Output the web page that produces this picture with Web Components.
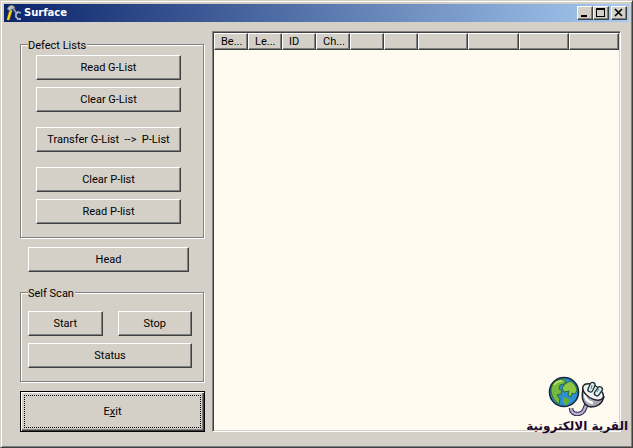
<!DOCTYPE html>
<html lang="en">
<head>
<meta charset="utf-8">
<title>Surface</title>
<style>
  html {
    --face: #d4d0c8;
    --light: #ffffff;
    --shadow: #808080;
    --dark: #404040;
    --paper: #fffbf0;
  }
  body {
    margin: 0;
    font: 11px/13px Roboto, "Liberation Sans", Arial, sans-serif;
    color: #000;
    background: var(--face);
  }
</style>
</head>
<body>

<surface-window caption="Surface">
  <side-panel slot="side">
    <group-box class="lists" caption="Defect Lists">
      <push-button>Read G-List</push-button>
      <push-button>Clear G-List</push-button>
      <push-button apart>Transfer G-List&nbsp; --&gt;&nbsp; P-List</push-button>
      <push-button>Clear P-list</push-button>
      <push-button>Read P-list</push-button>
    </group-box>
    <push-button class="head">Head</push-button>
    <group-box caption="Self Scan" scan>
      <button-pair>
        <push-button>Start</push-button>
        <push-button>Stop</push-button>
      </button-pair>
      <push-button>Status</push-button>
    </group-box>
    <push-button default>E<u>x</u>it</push-button>
  </side-panel>
  <defect-table columns="Be...,Le...,ID,Ch...,,,,,,"></defect-table>
</surface-window>
<site-mark></site-mark>

<script>
class SurfaceWindow extends HTMLElement {
  constructor() {
    super();
    this.attachShadow({ mode: 'open' });
    this.shadowRoot.innerHTML = `
    <style>
      :host {
        display: flex;
        flex-direction: column;
        box-sizing: border-box;
        min-height: 100vh;
        padding: 2px;
        background: var(--face);
        border: 1px solid;
        border-color: var(--face) var(--dark) var(--dark) var(--face);
        box-shadow: inset 1px 1px 0 var(--light), inset -1px -1px 0 var(--shadow);
      }
      main {
        flex: 1;
        display: flex;
        gap: 7px;
        padding: 9px 9px 13px 17px;
      }
      ::slotted(defect-table) { flex: 1; }
    </style>
    <title-bar></title-bar>
    <main>
      <slot name="side"></slot>
      <slot></slot>
    </main>
    `;
  }

  connectedCallback() {
    this.shadowRoot.querySelector('title-bar').textContent = this.getAttribute('caption');
  }
}

class TitleBar extends HTMLElement {
  constructor() {
    super();
    this.attachShadow({ mode: 'open' });
    this.shadowRoot.innerHTML = `
    <style>
      :host {
        display: flex;
        align-items: center;
        box-sizing: border-box;
        height: 18px;
        margin: 1px;
        margin-bottom: 0;
        padding: 0 2px;
        color: #fff;
        background: linear-gradient(to right, #0a246a, #a6caf0);
      }
      h1 {
        flex: 1;
        margin: 0 0 0 2px;
        font: bold 10px/16px "DejaVu Sans", sans-serif;
      }
      button {
        width: 16px;
        height: 14px;
        padding: 0;
        border: 1px solid;
        border-color: var(--light) var(--dark) var(--dark) var(--light);
        box-shadow: inset -1px -1px 0 var(--shadow);
        background: var(--face);
      }
      button:last-of-type { margin-left: 2px; }
      svg { display: block; }
    </style>
    <svg width="16" height="16" viewBox="0 0 16 16">
      <path d="M5 5 2 15" stroke="#5c4a10" stroke-width="3.600"/>
      <path d="M5 5 2 15" stroke="#f2d42a" stroke-width="2.400"/>
      <path d="M1 4 3 1 6 0 9 2 8 5 6 4 4 6z" fill="#b9c0bc" stroke="#4b5555" stroke-width=".6"/>
      <path d="M7 3 11 9" stroke="#8791ad" stroke-width="2"/>
      <path d="M15 8 12 7 10 9 10 12 12 14 15 14" fill="none" stroke="#a8b0c8" stroke-width="1.800"/>
    </svg>
    <h1><slot></slot></h1>
    <button aria-label="Minimize"><svg width="14" height="12"><path d="M3 8h6v2H3z"/></svg></button>
    <button aria-label="Maximize"><svg width="14" height="12"><path d="M2 1h9v9H2zM3 3v6h7V3z" fill-rule="evenodd"/></svg></button>
    <button aria-label="Close"><svg width="14" height="12"><path d="M3 2 10 9M10 2 3 9" stroke="#000" stroke-width="1.600"/></svg></button>
    `;
  }
}

class SidePanel extends HTMLElement {
  constructor() {
    super();
    this.attachShadow({ mode: 'open' });
    this.shadowRoot.innerHTML = `
    <style>
      :host {
        display: flex;
        flex-direction: column;
        gap: 8px;
        flex: 0 0 185px;
        padding-top: 6px;
      }
      ::slotted(.head) { margin: 0 16px 5px 8px; }
    </style>
    <slot></slot>
    `;
  }
}

class GroupBox extends HTMLElement {
  constructor() {
    super();
    this.attachShadow({ mode: 'open' });
    this.shadowRoot.innerHTML = `
    <style>
      :host { display: block; }
      fieldset {
        margin: 0 1px 1px 0;
        padding: 3px 22px 13px 15px;
        min-width: 0;
        border: 1px solid var(--shadow);
        box-shadow: 1px 1px 0 var(--light), inset 1px 1px 0 var(--light);
      }
      :host([scan]) fieldset { padding: 11px 11px 13px 7px; }
      legend {
        margin-left: -8px;
        padding: 2px 1px 0 0;
        background: var(--face);
      }
      :host([scan]) legend { margin-left: 0; }
      div {
        display: flex;
        flex-direction: column;
        gap: 7px;
      }
      ::slotted([apart]) { margin: 8px 0; }
    </style>
    <fieldset>
      <legend></legend>
      <div><slot></slot></div>
    </fieldset>
    `;
  }

  connectedCallback() {
    this.shadowRoot.querySelector('legend').textContent = this.getAttribute('caption');
  }
}

class ButtonPair extends HTMLElement {
  constructor() {
    super();
    this.attachShadow({ mode: 'open' });
    this.shadowRoot.innerHTML = `
    <style>
      :host { display: flex; gap: 15px; }
      ::slotted(*) { flex: 1; }
    </style>
    <slot></slot>
    `;
  }
}

class PushButton extends HTMLElement {
  constructor() {
    super();
    this.attachShadow({ mode: 'open' });
    this.shadowRoot.innerHTML = `
    <style>
      :host { display: block; }
      button {
        display: block;
        width: 100%;
        height: 25px;
        padding: 0;
        font: inherit;
        color: inherit;
        white-space: nowrap;
        background: var(--face);
        border: 1px solid;
        border-color: var(--light) var(--dark) var(--dark) var(--light);
        box-shadow: inset -1px -1px 0 var(--shadow);
      }
      /* default button: black frame and the dotted focus line */
      :host([default]) button {
        height: 41px;
        border-color: #000;
        box-shadow: inset 1px 1px 0 var(--light), inset -1px -1px 0 var(--dark), inset -2px -2px 0 var(--shadow);
        outline: 1px dotted #000;
        outline-offset: -5px;
      }
    </style>
    <button type="button"><slot></slot></button>
    `;
  }
}

class DefectTable extends HTMLElement {
  constructor() {
    super();
    this.attachShadow({ mode: 'open' });
    this.shadowRoot.innerHTML = `
    <style>
      :host {
        display: block;
        padding: 1px;
        background: var(--paper);
        border: 1px solid;
        border-color: var(--shadow) var(--light) var(--light) var(--shadow);
        box-shadow: inset 1px 1px 0 var(--dark), inset -1px -1px 0 var(--face);
      }
      table {
        width: 100%;
        table-layout: fixed;
        border-collapse: separate;
        border-spacing: 0;
      }
      th {
        box-sizing: border-box;
        height: 17px;
        padding: 0 0 0 6px;
        font-weight: normal;
        text-align: left;
        white-space: nowrap;
        background: var(--face);
        border: 1px solid;
        border-color: var(--light) var(--dark) var(--dark) var(--light);
        box-shadow: inset -1px -1px 0 var(--shadow);
      }
      th:nth-child(-n+6) { width: 34px; }
    </style>
    <table>
      <thead><tr></tr></thead>
      <tbody></tbody>
    </table>
    `;
  }

  connectedCallback() {
    const row = this.shadowRoot.querySelector('tr');
    this.getAttribute('columns').split(',').forEach(name => {
      const th = document.createElement('th');
      th.textContent = name;
      row.appendChild(th);
    });
  }
}

class SiteMark extends HTMLElement {
  constructor() {
    super();
    this.attachShadow({ mode: 'open' });
    this.shadowRoot.innerHTML = `
    <style>
      :host {
        position: absolute;
        right: 5px;
        bottom: 12px;
        display: flex;
        flex-direction: column;
        align-items: center;
        color: #1c0a2c;
        font: bold 12px/20px "DejaVu Sans", sans-serif;
      }
      svg { display: block; }
    </style>
    <svg width="60" height="41" viewBox="0 0 60 41">
      <path d="M24 33c0 8 12 8 14 0l2-5" fill="none" stroke="#34304a" stroke-width="4.600"/>
      <path d="M24 33c0 8 12 8 14 0l2-5" fill="none" stroke="#b8b0d4" stroke-width="2.400"/>
      <circle cx="17" cy="17" r="14.500" fill="#2f8fd0" stroke="#14283c" stroke-width="1.600"/>
      <path d="M4 14c1-6 6-10 12-10l3 2-2 3-4 1-1 4 3 2-1 3-4 1 3 4-1 5c-5-3-8-9-8-15z" fill="#76bb3c" stroke="#245c2c" stroke-width=".8"/>
      <path d="M18 9l5-3c4 2 6 5 7 9l-2 4-3-1-1 4-3-2 1-4-5 1-2-4z" fill="#8cc844" stroke="#245c2c" stroke-width=".8"/>
      <path d="M16 22l5 1 2 3-4 5-3-4z" fill="#5fae3c"/>
      <path d="M7 10c2-3 5-4 8-4" fill="none" stroke="#c8e868" stroke-width="1.500"/>
      <path d="M36 14c-2 9 0 17 8 18 6 0 11-3 13-10z" fill="#a9a9b4" stroke="#20202a" stroke-width="1.400"/>
      <path d="M38 19c0 5 3 8 8 9" fill="none" stroke="#fff" stroke-width="2.400"/>
      <ellipse cx="46" cy="17" rx="11.500" ry="6.500" transform="rotate(32 46 17)" fill="#f3f3f3" stroke="#20202a" stroke-width="1.400"/>
      <g fill="#d8eeee" stroke="#1c3038" stroke-width="1.300">
        <rect x="42" y="7" width="5" height="10" rx="2.500" transform="rotate(24 44 12)"/>
        <rect x="49" y="11" width="5" height="10" rx="2.500" transform="rotate(36 51 16)"/>
      </g>
      <path d="M45 10l-1 4M52 14l-2 3" stroke="#468c94"/>
    </svg>
    <span lang="ar" dir="rtl">القرية الالكترونية</span>
    `;
  }
}

customElements.define('surface-window', SurfaceWindow);
customElements.define('title-bar', TitleBar);
customElements.define('side-panel', SidePanel);
customElements.define('group-box', GroupBox);
customElements.define('button-pair', ButtonPair);
customElements.define('push-button', PushButton);
customElements.define('defect-table', DefectTable);
customElements.define('site-mark', SiteMark);
</script>
</body>
</html>
